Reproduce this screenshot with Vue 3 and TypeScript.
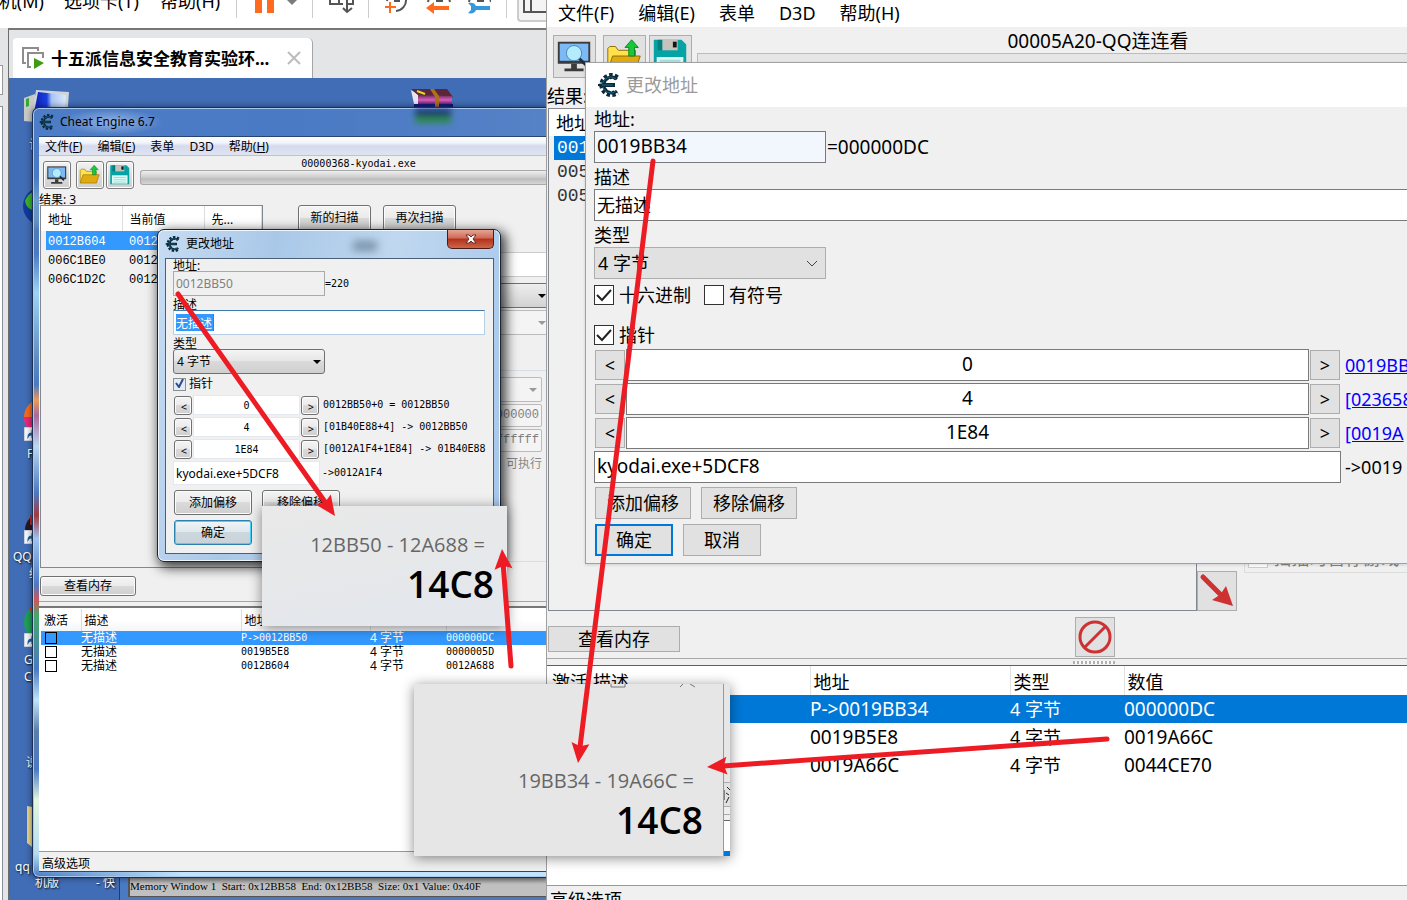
<script setup lang="ts">
import { ref } from 'vue'

interface Point { x: number; y: number }
interface Entry { checked: boolean; name: string; address: string; type: string; value: string }

const oldOffsets = ref([
  { value: '0', result: '0012BB50+0 = 0012BB50' },
  { value: '4', result: '[01B40E88+4] -> 0012BB50' },
  { value: '1E84', result: '[0012A1F4+1E84] -> 01B40E88' },
])
const newOffsets = ref([
  { value: '0', result: '0019BB' },
  { value: '4', result: '[023658' },
  { value: '1E84', result: '[0019A' },
])
const oldEntries = ref<Entry[]>([
  { checked: false, name: '无描述', address: 'P->0012BB50', type: '4 字节', value: '000000DC' },
  { checked: false, name: '无描述', address: '0019B5E8', type: '4 字节', value: '0000005D' },
  { checked: false, name: '无描述', address: '0012B604', type: '4 字节', value: '0012A688' },
])
const newEntries = [
  { address: 'P->0019BB34', type: '4 字节', value: '000000DC' },
  { address: '0019B5E8', type: '4 字节', value: '0019A66C' },
  { address: '0019A66C', type: '4 字节', value: '0044CE70' },
]
const found = [
  { address: '0012B604', value: '0012' },
  { address: '006C1BE0', value: '0012' },
  { address: '006C1D2C', value: '0012' },
]

const oldDescription = ref('无描述')
const newDescription = ref('无描述')
const newAddress = ref('0019BB34')
const oldBase = ref('kyodai.exe+5DCF8')
const newBase = ref('kyodai.exe+5DCF8')
const oldPointer = ref(true)
const newPointer = ref(true)
const hex = ref(true)
const signed = ref(false)

function arrow(from: Point, to: Point) {
  const len = Math.hypot(to.x - from.x, to.y - from.y)
  const ux = (to.x - from.x) / len
  const uy = (to.y - from.y) / len
  const at = (back: number, side: number) =>
    `${to.x - ux * back - uy * side},${to.y - uy * back + ux * side}`
  return {
    head: [at(0, 0), at(20, 9), at(17, 0), at(20, -9)].join(' '),
    x1: from.x, y1: from.y,
    x2: to.x - ux * 16, y2: to.y - uy * 16,
  }
}
const arrows = [
  arrow({ x: 178, y: 294 }, { x: 335, y: 516 }),
  arrow({ x: 653, y: 161 }, { x: 578, y: 763 }),
  arrow({ x: 511, y: 666 }, { x: 502, y: 549 }),
  arrow({ x: 1107, y: 739 }, { x: 707, y: 767 }),
]
</script>

<template>
  <div class="stage">
    <svg class="defs" aria-hidden="true">
      <defs>
        <linearGradient id="scr" x1="0" y1="0" x2="1" y2="0">
          <stop offset="0" stop-color="#0d1fb4" /><stop offset=".4" stop-color="#1a3fe0" /><stop offset=".55" stop-color="#a9c4f4" /><stop offset="1" stop-color="#dbe8fb" />
        </linearGradient>
        <linearGradient id="rar" x1="0" y1="0" x2="0" y2="1">
          <stop offset="0" stop-color="#6b2a55" /><stop offset=".5" stop-color="#d65fc0" /><stop offset="1" stop-color="#5a1450" />
        </linearGradient>
      </defs>
      <symbol id="i-monitor" viewBox="0 0 43 43">
        <path d="M4 6h34v23H4z" fill="#3b3b3b" /><path d="M6 8h30v18H6z" fill="#7db9f7" />
        <path d="M18 29h6v5h-6zM11 34h20v3H11z" fill="#3b3b3b" />
        <path d="M26 23l8 8" stroke="#1c2c44" stroke-width="3" /><circle cx="21" cy="18" r="8" fill="#b4ecff" stroke="#4b87b0" />
      </symbol>
      <symbol id="i-folder" viewBox="0 0 43 43">
        <path d="M4 35V13l2-2h6l3 4h18v20z" fill="#ffe24d" stroke="#8d6b00" />
        <path d="M4 36l5-15h29l-5 15z" fill="#e0ab10" stroke="#8d6b00" />
        <path d="M29 4l7 8h-4v9h-6v-9h-4z" fill="#18c83a" stroke="#0d8625" />
      </symbol>
      <symbol id="i-disk" viewBox="0 0 43 43">
        <path d="M4 4h29l5 5v29H4z" fill="#05a3a4" /><path d="M8 4h5v11H8z" fill="#087d7e" />
        <path d="M13 4h16v11H13z" fill="#c5c3bb" /><path d="M24 6h4v6h-4z" fill="#151515" />
        <path d="M7 22h28v15H7z" fill="#d9fbf8" /><path d="M10 26h22M10 30h22M10 34h22" stroke="#a5dcd9" stroke-width="2" />
      </symbol>
      <symbol id="i-ce" viewBox="0 0 24 24">
        <path d="M20 5A9 9 0 1 0 20 19" fill="none" stroke="#0c2a3a" stroke-width="6" stroke-dasharray="3 2" />
        <path d="M20 6A8 8 0 1 0 20 18" fill="none" stroke="#0c2a3a" stroke-width="3" />
        <path d="M19 6A8 8 0 1 0 19 18" fill="none" stroke="#14688c" stroke-width="1" />
        <path d="M1 11l6-1h11v4H7l-6-1z" fill="#0c2a3a" /><path d="M5 12h11" stroke="#14688c" />
      </symbol>
      <symbol id="i-link" viewBox="0 0 15 15">
        <path d="M0 0h15v15H0z" fill="#f3f6fb" stroke="#9aa9bb" /><path d="M4 13c-1-4 1-7 4-7V3l5 5-5 4V9c-2 0-3 1-4 4z" fill="#1f5fa8" />
      </symbol>
    </svg>

    <section class="old">
      <header class="vmbar">
        <span class="vm-m1">机(M)</span><span class="vm-m2">选项卡(T)</span><span class="vm-m3">帮助(H)</span>
        <i class="vsep"></i>
        <svg class="vm-pause" width="46" height="30" viewBox="0 -14 46 30"><path d="M0 -8h7v21H0zM12 -8h7v21h-7z" fill="#ff6a1f" /><path d="M31 -1h12l-6 6z" fill="#7c7c7c" /></svg>
        <i class="vsep"></i>
        <svg class="vm-dev" width="26" height="30" viewBox="0 -14 26 30" fill="none" stroke="#555" stroke-width="2"><path d="M1 -8v12h13M10 -8v12M24 -8v12h-5M18 -4v15M14 8l4 4 5-4" /></svg>
        <i class="vsep"></i>
        <svg class="vm-clock" width="106" height="30" viewBox="0 -14 106 30" fill="none" stroke-width="2">
          <g stroke="#555"><path d="M11 11a11 11 0 0 0 10 -12M2 1l1-6M10 -6v7h5M43 2l2-8M65 2l-2-8M52 -6v7h6M84 2l2-8M106 2l-2-8M93 -6v7h6" /></g>
          <path d="M0 7h11M5 2v11" stroke="#ff6a1f" /><path d="M41 8l8-6v4h15v4H49v4z" fill="#ff6a1f" />
          <path d="M83 3c4-1 7 0 8 3h14v4H91c-1 3-4 4-8 3l3-3V6z" fill="#3498dd" />
        </svg>
        <i class="vsep"></i>
        <button class="vm-view" type="button"><svg width="30" height="30" viewBox="0 -14 30 30" fill="none" stroke="#555" stroke-width="2"><path d="M30 12H5V-8M12 -8v20" /></svg></button>
      </header>

      <div class="vmbody">
        <aside class="strip"><i class="strip-box"></i><i class="strip-line"></i></aside>
        <div class="vmmain">
          <div class="tabs">
            <div class="tab">
              <svg width="23" height="23" viewBox="0 0 23 23"><path d="M4 16H1V1h15v3M9 20H6V6h15v5" fill="none" stroke="#8d8d8d" stroke-width="2" /><path d="M12 11l10 5-10 6z" fill="#3f9b15" /></svg>
              <b>十五派信息安全教育实验环...</b>
              <button type="button" class="tabx"><svg width="14" height="14" viewBox="0 0 14 14"><path d="M1 1l12 12M13 1L1 13" stroke="#bcbcbc" stroke-width="2" /></svg></button>
            </div>
          </div>
          <div class="desktop">
            <svg class="d-art" width="540" height="822" viewBox="9 78 540 822">
              <path d="M24 98l11-4v28l-11-1z" fill="#c9c9c7" /><path d="M26 99l3-1v8l-3 1z" fill="#35a83a" />
              <path d="M36 90l33 2-2 28-35-4z" fill="#cfd3da" /><path d="M38 92l28 3-2 22-30-4z" fill="url(#scr)" />
              <path d="M411 90l8 5v13l-5-4z" fill="#e8e4ee" /><path d="M411 89h36l6 8-34-1z" fill="#5b2638" />
              <path d="M418 95l34 1v9h-34z" fill="url(#rar)" /><path d="M414 104h39v3h-39z" fill="#111a7a" />
              <path d="M430 89l4 0 5 7v11h-4V97z" fill="#b16e1c" /><path d="M417 91l8 3" stroke="#e6d92d" stroke-width="2" />
              <circle cx="42" cy="206" r="19" fill="#123a9a" /><path d="M25 201c3-7 7-9 9-9v18c-4 0-8-3-9-9z" fill="#39b32a" />
              <circle cx="42" cy="417" r="18" fill="#f46a20" /><path d="M24 417a18 18 0 0 0 12 17V417z" fill="#e8267a" />
              <circle cx="42" cy="530" r="17" fill="#241a24" /><path d="M30 515h6v10h-6z" fill="#b92a2a" />
              <circle cx="42" cy="622" r="18" fill="#1e9f56" /><path d="M29 609l8-6v16z" fill="#d83a30" />
              <path d="M27 806l10 2v43l-10-8z" fill="#e9d68a" />
              <use href="#i-link" x="24" y="427" width="14" height="14" /><use href="#i-link" x="24" y="530" width="14" height="14" /><use href="#i-link" x="24" y="633" width="14" height="14" />
            </svg>
            <span class="dl l1">计</span><span class="dl l2">F</span><span class="dl l3">QQ</span><span class="dl l4">统</span>
            <span class="dl l5">G</span><span class="dl l6">C</span><span class="dl l7">说</span><span class="dl l8">qq</span>
            <span class="dl l9">机版</span><span class="dl l10">- 快</span>

            <div class="memwin"><p>Memory Window 1&nbsp; Start: 0x12BB58&nbsp; End: 0x12BB58&nbsp; Size: 0x1 Value: 0x40F</p></div>

            <div class="ce7">
              <div class="ce7-title"><svg width="16" height="16"><use href="#i-ce" /></svg><span>Cheat Engine 6.7</span><i class="rarblur"></i></div>
              <div class="ce7-client">
                <nav class="ce7-menu"><span>文件(<u>F</u>)</span><span>编辑(<u>E</u>)</span><span>表单</span><span>D3D</span><span>帮助(<u>H</u>)</span></nav>
                <div class="ce7-tools">
                  <button type="button" class="tb first"><svg><use href="#i-monitor" /></svg></button>
                  <button type="button" class="tb"><svg><use href="#i-folder" /></svg></button>
                  <button type="button" class="tb third"><svg><use href="#i-disk" /></svg></button>
                  <div class="ce7-proc"><p class="mono">00000368-kyodai.exe</p><i></i></div>
                </div>
                <p class="ce7-count">结果: 3</p>
                <div class="ce7-mid">
                  <div class="ce7-found">
                    <table>
                      <thead><tr><th>地址</th><th>当前值</th><th>先...</th></tr></thead>
                      <tbody><tr v-for="(f, i) in found" :key="f.address" :class="{ sel: i === 0 }"><td>{{ f.address }}</td><td>{{ f.value }}</td><td></td></tr></tbody>
                    </table>
                  </div>
                  <div class="ce7-scan">
                    <div class="scanbtns"><button type="button" class="b7">新的扫描</button><button type="button" class="b7">再次扫描</button></div>
                    <div class="ghost white"></div>
                    <div class="ghost combo"><i class="tri"></i></div>
                    <div class="ghost combo off"><i class="tri"></i></div>
                    <div class="gbox">
                      <div class="ghost combo off"><i class="tri"></i></div>
                      <div class="ghost num">000000</div>
                      <div class="ghost num">ffffff</div>
                      <div class="exec">可执行</div>
                    </div>
                  </div>
                </div>
                <div class="ce7-view"><button type="button" class="b7">查看内存</button></div>
                <div class="ce7-list">
                  <table>
                    <thead><tr><th>激活</th><th>描述</th><th>地址</th><th>类型</th><th>数值</th></tr></thead>
                    <tbody>
                      <tr v-for="(e, i) in oldEntries" :key="e.address" :class="{ sel: i === 0 }">
                        <td><input v-model="e.checked" type="checkbox" aria-label="激活" /></td><td>{{ e.name }}</td>
                        <td class="mono">{{ e.address }}</td><td>{{ e.type }}</td><td class="mono">{{ e.value }}</td>
                      </tr>
                    </tbody>
                  </table>
                </div>
                <footer class="ce7-foot">高级选项</footer>
              </div>
            </div>

            <div class="dlg7">
              <div class="dlg7-title"><svg width="16" height="16"><use href="#i-ce" /></svg><span>更改地址</span><i class="smudge"></i>
                <button type="button" class="close7"><svg width="12" height="10" viewBox="0 0 12 10"><path d="M1 1h3l2 2 2-2h3L8 5l3 4H8L6 7 4 9H1l3-4z" fill="#fff" stroke="#6b2a2a" /></svg></button>
              </div>
              <form class="dlg7-body" @submit.prevent>
                <label for="oa" class="la">地址:</label>
                <div class="line"><input id="oa" class="t7 dis" value="0012BB50" disabled /><span class="mono">=220</span></div>
                <label for="od">描述</label>
                <div class="desc7"><input id="od" v-model="oldDescription" class="t7" /><span aria-hidden="true"></span></div>
                <label for="ot">类型</label>
                <div class="combo7"><select id="ot"><option>4 字节</option></select><i class="tri"></i></div>
                <label class="chk7"><input v-model="oldPointer" type="checkbox" /><svg width="9" height="9" viewBox="0 0 9 9"><path d="M1 4l3 4 4-8" fill="none" stroke="#2b4a8d" stroke-width="2" /></svg>指针</label>
                <div v-for="o in oldOffsets" :key="o.value" class="off7">
                  <button type="button" class="b7">&lt;</button><input v-model="o.value" class="mono" :aria-label="o.value" /><button type="button" class="b7">&gt;</button><span class="mono">{{ o.result }}</span>
                </div>
                <div class="line base7"><input v-model="oldBase" class="t7 flat" aria-label="指针" /><span class="mono">-&gt;0012A1F4</span></div>
                <div class="btns7"><button type="button" class="b7">添加偏移</button><button type="button" class="b7">移除偏移</button></div>
                <div class="btns7"><button type="submit" class="b7 ok7">确定</button></div>
              </form>
            </div>
          </div>
        </div>
      </div>
    </section>

    <section class="new">
      <nav class="menu10"><span>文件(F)</span><span>编辑(E)</span><span>表单</span><span>D3D</span><span>帮助(H)</span></nav>
      <div class="tools10">
        <button type="button" class="tb10"><svg><use href="#i-monitor" /></svg></button>
        <button type="button" class="tb10 gap"><svg><use href="#i-folder" /></svg></button>
        <button type="button" class="tb10"><svg><use href="#i-disk" /></svg></button>
        <div class="proc10"><p>00005A20-QQ连连看</p><i></i></div>
      </div>
      <p class="count10">结果:</p>
      <div class="mid10">
        <div class="found10">
          <table><thead><tr><th>地址</th></tr></thead><tbody><tr class="sel"><td>001</td></tr><tr><td>005</td></tr><tr><td>005</td></tr></tbody></table>
        </div>
        <div class="side10">
          <fieldset><label><input type="checkbox" disabled />扫描时暂停游戏</label></fieldset>
          <button type="button" class="sq"><svg width="38" height="38" viewBox="0 0 38 38"><path d="M5 5l18 18" stroke="#cd3131" stroke-width="5" stroke-linecap="round" /><path d="M35 34L28 14l-4 6-4 4-6 4z" fill="#cd3131" /></svg></button>
        </div>
      </div>
      <div class="ctl10">
        <button type="button" class="b10 view10">查看内存</button>
        <button type="button" class="sq"><svg width="38" height="38" viewBox="0 0 38 38" fill="none" stroke="#cd3131" stroke-width="3"><circle cx="19" cy="19" r="15" /><path d="M9 29L29 9" /></svg></button>
      </div>
      <div class="split10"><i></i></div>
      <div class="list10">
        <table>
          <thead><tr><th>激活</th><th>描述</th><th>地址</th><th>类型</th><th>数值</th></tr></thead>
          <tbody><tr v-for="(e, i) in newEntries" :key="e.address" :class="{ sel: i === 0 }"><td></td><td></td><td class="latin">{{ e.address }}</td><td>{{ e.type }}</td><td class="latin">{{ e.value }}</td></tr></tbody>
        </table>
      </div>
      <footer class="foot10">高级选项</footer>

      <div class="dlg10">
        <div class="dlg10-title"><svg width="24" height="24"><use href="#i-ce" /></svg><span>更改地址</span></div>
        <form class="dlg10-body" @submit.prevent>
          <label for="na">地址:</label>
          <div class="row10"><input id="na" v-model="newAddress" class="t10 addr10 latin" /><span class="latin">=000000DC</span></div>
          <label for="nd" class="l10">描述</label>
          <input id="nd" v-model="newDescription" class="t10 desc10" />
          <label for="nt" class="l10">类型</label>
          <div class="combo10"><select id="nt"><option>4 字节</option></select><svg width="12" height="7" viewBox="0 0 12 7"><path d="M1 1l5 5 5-5" fill="none" stroke="#444" /></svg></div>
          <div class="checks10">
            <label class="chk10"><input v-model="hex" type="checkbox" /><svg viewBox="0 0 20 20"><path d="M3 10l5 5 9-10" /></svg>十六进制</label>
            <label class="chk10"><input v-model="signed" type="checkbox" />有符号</label>
          </div>
          <div class="checks10 ptr10"><label class="chk10"><input v-model="newPointer" type="checkbox" /><svg viewBox="0 0 20 20"><path d="M3 10l5 5 9-10" /></svg>指针</label></div>
          <div v-for="o in newOffsets" :key="o.value" class="off10">
            <button type="button" class="b10">&lt;</button><input v-model="o.value" class="t10 latin" :aria-label="o.value" /><button type="button" class="b10">&gt;</button><a href="#">{{ o.result }}</a>
          </div>
          <div class="off10 base10"><input v-model="newBase" class="t10 latin" aria-label="指针" /><span>-&gt;0019</span></div>
          <div class="btns10 wide"><button type="button" class="b10">添加偏移</button><button type="button" class="b10">移除偏移</button></div>
          <div class="btns10"><button type="submit" class="b10 ok10">确定</button><button type="button" class="b10">取消</button></div>
        </form>
      </div>
    </section>

    <div class="calc c1"><p>12BB50 - 12A688 =</p><strong>14C8</strong></div>
    <div class="calc c2">
      <svg class="c2-top" width="90" height="5" viewBox="0 0 90 5"><path d="M1 0v3h14V0M70 3l3-3M80 0l5 3" fill="none" stroke="#777" /></svg>
      <p>19BB34 - 19A66C =</p><strong>14C8</strong>
      <div class="c2-edge"><svg width="6" height="18" viewBox="0 0 6 18"><path d="M3 1l3 3M2 7l3 2M2 17l3-6M0 4v10" fill="none" stroke="#222" /></svg></div>
    </div>

    <svg class="arrows" aria-hidden="true">
      <g v-for="(a, i) in arrows" :key="i">
        <line :x1="a.x1" :y1="a.y1" :x2="a.x2" :y2="a.y2" /><polygon :points="a.head" />
      </g>
    </svg>
  </div>
</template>

<style>
body { margin: 0; }
</style>

<style scoped>
* { box-sizing: border-box; }
p { margin: 0; }
button, input, select { font: inherit; color: inherit; margin: 0; padding: 0; border-radius: 0; outline: none; }
select, input[type="checkbox"] { appearance: none; }
table { border-collapse: collapse; table-layout: fixed; width: 100%; }
th { font-weight: 400; text-align: left; padding: 0; }
td { padding: 0; white-space: nowrap; }
svg { display: block; flex: none; }
i { display: block; }
.stage { position: relative; display: grid; grid-template-columns: 547fr 860fr; height: 100vh; overflow: hidden; font-family: "Noto Sans", "Noto Sans CJK SC", sans-serif; color: #000; background: #f0f0f0; }
.defs { position: absolute; width: 0; height: 0; }
.mono { font-family: "DejaVu Sans Mono", "Noto Sans CJK SC", monospace; font-size: 10px; }

.old { display: flex; flex-direction: column; min-width: 0; overflow: hidden; font-size: 12px; line-height: 14px; }
.vmbar { display: flex; align-items: center; height: 54px; margin-top: -26px; background: #fff; font-size: 18px; line-height: 24px; flex: none; white-space: nowrap; }
.vm-m1 { width: 44px; display: flex; justify-content: flex-end; }
.vm-m2 { margin-left: 20px; width: 76px; }
.vm-m3 { margin-left: 20px; width: 62px; }
.vsep { width: 1px; height: 34px; background: #ccc; margin-left: 14px; }
.vm-pause { margin-left: 18px; }
.vm-pause + .vsep { margin-left: 11px; }
.vm-dev { margin-left: 16px; }
.vm-dev + .vsep { margin-left: 13px; }
.vm-clock { margin-left: 16px; }
.vm-clock + .vsep { margin-left: 15px; }
.vm-view { height: 42px; flex: 1; margin-left: 10px; border: 2px solid #ccc; border-right: 0; border-radius: 4px 0 0 4px; background: #f4f4f4; overflow: hidden; }
.vmbody { flex: 1; display: flex; min-height: 0; background: #e4e5e7; }
.strip { width: 8px; flex: none; }
.strip-box { height: 30px; width: 3px; margin-top: 37px; border: 1px solid #999; border-left: 0; background: #fff; }
.strip-line { width: 3px; height: 100%; margin-top: 11px; border: 1px solid #8a9097; border-left: 0; background: #fff; }
.vmmain { flex: 1; min-width: 0; display: flex; flex-direction: column; border-left: 1px solid #6c6c6c; border-top: 2px solid #777; }
.tabs { height: 48px; padding: 8px 0 0 4px; flex: none; }
.tab { display: flex; align-items: center; width: 300px; height: 40px; padding: 0 11px 0 9px; background: #fff; border-right: 1px solid #a5a5a5; border-radius: 4px 5px 0 0; }
.tab b { flex: 1; margin-left: 6px; padding-top: 2px; font-size: 17px; line-height: 24px; white-space: nowrap; }
.tabx { border: 0; background: none; }
.desktop { position: relative; flex: 1; min-height: 0; background: #416db6; overflow: hidden; }
.d-art { position: absolute; left: 0; top: 0; }
.dl { position: absolute; color: #fff; font-size: 12px; text-shadow: 1px 1px 2px #000; white-space: nowrap; }
.l1 { left: 20px; top: 60px; } .l2 { left: 18px; top: 369px; } .l3 { left: 4px; top: 472px; } .l4 { left: 20px; top: 489px; }
.l5 { left: 15px; top: 575px; } .l6 { left: 15px; top: 592px; } .l7 { left: 17px; top: 678px; } .l8 { left: 6px; top: 782px; }
.l9 { left: 26px; top: 798px; } .l10 { left: 87px; top: 798px; }
.memwin { position: absolute; left: 110px; right: 0; bottom: 0; height: 24px; padding: 0 0 3px 8px; background: #4a7ac4; border-left: 1px solid #1e3c70; }
.memwin p { height: 21px; padding: 4px 0 0; background: linear-gradient(#777, #c0c0c0 8px); border: 2px solid #555; border-width: 0 0 1px 2px; font-family: "Liberation Serif", serif; font-size: 11px; line-height: 12px; white-space: nowrap; overflow: hidden; }
.ce7 { position: absolute; left: 23px; right: 0; top: 29px; bottom: 22px; display: flex; flex-direction: column; padding: 0 0 5px 6px; border: 1px solid #1b2f52; border-right: 0; border-radius: 7px 0 0 7px; box-shadow: 0 0 0 1px #a9c8ee inset, 0 0 6px #0008; background: linear-gradient(#4a7ac4aa, #4a7ac4aa 100px, transparent 130px), linear-gradient(90deg, #5383ca, #4a7ac4 50%, #6d91cb 100%) top / 100% 30px no-repeat, linear-gradient(90deg, transparent 8px, #bfe4fb 150px) bottom / 100% 6px no-repeat, linear-gradient(#4a7ac4 0 9%, #bdebd8 12%, #4c7ab8 16%, #4a7ac4 19%, #9ed3f5 24%, #5a8ac0 33%, #4a7ac4 36%, #e79b5b 38%, #a86a9a 40%, #bcd8f2 44%, #4a7ac4 50%, #a23a3e 53%, #9fc4f0 56%, #4a7ac4 62%, #d0555b 64%, #45a86a 66%, #4a7ac4 73%, #bfe6fb 77%, #5a7eac 81%, #4a7ac4 86%, #e4f7df 90%, #b4dcf0 97%, #4a7ac4); }
.ce7-title { display: flex; align-items: center; height: 28px; gap: 5px; flex: none; position: relative; }
.ce7-title span { padding-right: 8px; background: radial-gradient(closest-side, #b7cdf0aa, transparent); line-height: 26px; }
.rarblur { position: absolute; left: 376px; top: 1px; width: 36px; height: 14px; background: linear-gradient(#1b2f7a 4px, #2c8a4a 8px); filter: blur(3px); }
.ce7-client { flex: 1; min-height: 0; display: flex; flex-direction: column; background: #f0f0f0; border: 1px solid #29446f; border-width: 1px 0; }
.ce7-menu { display: flex; gap: 15px; height: 19px; padding: 3px 6px 0; background: linear-gradient(#fff, #f0f3fa 6px, #d5dbec 9px, #dfe4f3); border-bottom: 1px solid #b9c3dd; flex: none; white-space: nowrap; }
.ce7-tools { display: flex; align-items: flex-start; height: 36px; padding: 5px 0 0 4px; flex: none; }
.tb { width: 28px; height: 28px; padding: 1px; border: 1px solid #7a7a7a; border-radius: 3px; background: linear-gradient(#f4f4f4, #ddd 50%, #cfcfcf); box-shadow: inset 0 0 0 1px #fff; }
.tb svg { width: 24px; height: 24px; }
.tb + .tb { margin-left: 5px; }
.tb.third { margin-left: 2px; }
.ce7-proc { flex: 1; margin-left: 6px; text-align: center; }
.ce7-proc p { height: 9px; line-height: 6px; margin-left: 30px; }
.ce7-proc i { height: 15px; border: 1px solid #a9a9a9; border-right: 0; border-radius: 3px 0 0 3px; background: linear-gradient(#eee, #ccc 50%, #bcbcbc 60%, #d6d6d6); }
.ce7-count { height: 13px; line-height: 16px; flex: none; }
.ce7-mid { flex: 364 1 0; min-height: 0; display: flex; padding-left: 1px; }
.ce7-found { width: 223px; flex: none; border: 1px solid #828790; }
.ce7-found thead { background: #fff; }
.ce7-found th { height: 25px; padding: 2px 0 0 7px; border-right: 1px solid #ddd; }
.ce7-found th:nth-child(1) { width: 81px; } .ce7-found th:nth-child(2) { width: 82px; }
.ce7-found td { height: 19px; padding: 2px 0 0 7px; font-family: "Liberation Mono", monospace; }
.ce7-found .sel { color: #fff; background: linear-gradient(90deg, #f0f0f0 5px, #39f 5px); }
.ce7-scan { flex: 1; display: flex; flex-direction: column; }
.scanbtns { display: flex; gap: 12px; padding: 0 0 0 35px; height: 47px; flex: none; }
.scanbtns .b7 { width: 73px; height: 26px; }
.b7 { border: 1px solid #707070; border-radius: 3px; background: linear-gradient(#f4f4f4, #ebebeb 48%, #dadada 50%, #cfcfcf); box-shadow: inset 0 0 0 1px #fcfcfc; line-height: 14px; white-space: nowrap; }
.tri { width: 0; height: 0; border: 4px solid transparent; border-top-color: #000; border-bottom: 0; }
.ghost { margin-left: 200px; height: 25px; border: 1px solid #bbb; border-right: 0; background: #f4f4f4; flex: none; }
.ghost.white { background: #fff; border-color: #ccc; }
.ghost.combo { display: flex; justify-content: flex-end; align-items: center; margin-top: 6px; padding-right: 1px; background: linear-gradient(#eee, #d2d2d2); border-color: #707070; }
.ghost.off { margin-top: 2px; background: #f4f4f4; border-color: #bbb; }
.off .tri { border-top-color: #999; }
.gbox { flex: 1; min-height: 0; margin: 35px 0 6px 200px; padding: 6px 5px 0 0; border: 1px solid #d5dfe5; border-width: 1px 0; }
.gbox .ghost { margin-left: 0; border-right: 1px solid #bbb; border-radius: 2px; padding-right: 4px; }
.gbox .ghost.combo { margin-top: 0; }
.gbox .num { height: 23px; margin-top: 2px; padding-right: 2px; text-align: right; line-height: 20px; color: #808080; font-family: "Liberation Mono", monospace; }
.exec { color: #888; text-align: right; padding-top: 5px; }
.ce7-view { height: 40px; padding: 8px 0 0 1px; border-bottom: 2px solid #777; flex: none; background: linear-gradient(#a5a5a5, #a5a5a5) 0 33px / 100% 1px no-repeat; }
.ce7-view .b7 { width: 96px; height: 20px; line-height: 16px; }
.ce7-list { flex: 242 1 0; min-height: 0; padding: 1px 0 0 2px; background: #fff; }
.ce7-list th { height: 22px; padding: 2px 0 0 3px; border-right: 1px solid #ddd; background: linear-gradient(#fff 50%, #f4f5f7); }
.ce7-list th:nth-child(1) { width: 40px; } .ce7-list th:nth-child(2) { width: 160px; } .ce7-list th:nth-child(3) { width: 129px; } .ce7-list th:nth-child(4) { width: 76px; }
.ce7-list td { height: 14px; line-height: 14px; }
.ce7-list .sel { background: #39f; color: #fff; }
.ce7-list input { display: block; width: 12px; height: 12px; margin-left: 4px; border: 1px solid #000; }
.ce7-foot { height: 20px; padding: 5px 0 0 3px; border-top: 1px solid #999; flex: none; }

.dlg7 { position: absolute; left: 148px; top: 151px; width: 344px; padding: 0 6px 7px 7px; border: 1px solid #1b2430; border-radius: 7px; background: linear-gradient(100deg, #c6dcf3, #a9c8e8 30%, #c0d7ef 60%, #a5c6ea); box-shadow: inset 0 0 0 1px #eef6ff, 3px 4px 12px 2px #000b; }
.dlg7-title { display: flex; align-items: center; gap: 5px; height: 28px; position: relative; }
.smudge { width: 24px; height: 10px; margin: 3px 0 0 114px; background: #40586c88; filter: blur(4px); }
.close7 { position: absolute; right: 0; top: 0; width: 47px; height: 19px; display: grid; place-items: center; border: 1px solid #4c1a1a; border-top: 0; border-radius: 0 0 5px 5px; background: linear-gradient(#e5a493, #cf6a55 45%, #b3311a 50%, #cb6748); }
.dlg7-body { padding: 0 8px 8px 7px; background: #f0f0f0; border: 1px solid #4a5f78; }
.dlg7-body > label { display: block; height: 14px; line-height: 18px; }
.dlg7-body > .la { height: 12px; line-height: 14px; }
.line { display: flex; align-items: center; }
.t7 { width: 152px; height: 25px; padding: 0 2px; border: 1px solid #c0c0c0; border-top-color: #999; background: #fff; }
.t7.dis { color: #808080; background: #f0f0f0; border-color: #aaa; }
.desc7 { position: relative; }
.desc7 .t7 { width: 100%; border-color: #b5cfe7; border-top-color: #3d7bad; color: #fff; background: linear-gradient(#39f, #39f) 2px 3px / 37px 17px no-repeat, #fff; }
.desc7 span { position: absolute; left: 40px; top: 4px; width: 1px; height: 17px; background: #b7611a; }
.combo7 { position: relative; width: 152px; }
.combo7 select { width: 100%; height: 25px; padding-left: 3px; border: 1px solid #707070; border-radius: 3px; background: linear-gradient(#f4f4f4, #e6e6e6 48%, #dadada 50%, #cfcfcf); }
.combo7 .tri { position: absolute; right: 4px; top: 11px; }
.dlg7-body > .chk7 { display: flex; align-items: center; height: 20px; gap: 3px; line-height: 14px; position: relative; }
.chk7 input { width: 13px; height: 13px; border: 1px solid #8e8f8f; background: #e2ebf5; }
.chk7 svg { position: absolute; left: 2px; top: 5px; }
.off7 { display: flex; align-items: center; height: 22px; padding-left: 1px; white-space: nowrap; }
.off7 .b7 { width: 18px; height: 19px; line-height: 12px; padding: 4px 0 0 2px; font-size: 11px; flex: none; }
.off7 input { width: 107px; height: 20px; margin: 0 1px; text-align: center; border: 1px solid #e3e9ef; background: #fff; flex: none; }
.off7 span { margin-left: 4px; }
.base7 { margin: 1px 0 5px; }
.base7 .t7 { width: 147px; height: 24px; border-color: #e3e9ef; }
.base7 span { margin-left: 2px; }
.btns7 { display: flex; gap: 10px; padding-left: 1px; }
.btns7 + .btns7 { margin-top: 5px; }
.btns7 .b7 { width: 78px; height: 25px; }
.b7.ok7 { border-color: #2d7fae; box-shadow: inset 0 0 0 1px #46d4fa; background: linear-gradient(#f0f5f8, #dfe8ed 48%, #cdd8de 50%, #c8d2d8); }

.new { position: relative; display: flex; flex-direction: column; min-width: 0; overflow: hidden; border-left: 1px solid #a0a0a0; margin-left: -1px; background: #f0f0f0; font-size: 18px; line-height: 24px; }
.latin { font-size: 19px; }
.menu10 { display: flex; gap: 24px; height: 27px; padding: 1px 11px 0; background: #fff; flex: none; white-space: nowrap; }
.tools10 { display: flex; height: 56px; padding: 8px 0 0 6px; flex: none; }
.tb10 { width: 43px; height: 43px; padding: 0; border: 1px solid #adadad; background: #e1e1e1; }
.tb10 svg { width: 41px; height: 41px; }
.tb10 + .tb10 { margin-left: 3px; }
.tb10 + .tb10.gap { margin-left: 7px; }
.proc10 { flex: 1; margin-left: 5px; text-align: center; }
.proc10 p { height: 18px; line-height: 12px; padding-left: 92px; font-size: 19px; }
.proc10 i { height: 26px; border: 1px solid #bcbcbc; border-right: 0; background: #e6e6e6; }
.count10 { height: 25px; line-height: 26px; flex: none; }
.mid10 { flex: 503 1 0; min-height: 0; display: flex; padding-left: 1px; }
.found10 { flex: 649; border: 1px solid #828790; }
.found10 th { height: 27px; padding-left: 7px; background: #fff; }
.found10 td { height: 24px; padding-left: 8px; font-family: "Liberation Mono", monospace; color: #333; }
.found10 .sel { background: linear-gradient(90deg, #f0f0f0 5px, #0078d7 5px); }
.found10 .sel td { color: #fff; }
.side10 { flex: 210; position: relative; display: flex; align-items: flex-end; }
.side10 fieldset { position: absolute; left: 47px; right: -4px; bottom: 38px; margin: 0; padding: 0 0 2px 3px; border: 1px solid #dcdcdc; min-width: 0; }
.side10 label { display: flex; align-items: center; gap: 5px; color: #838383; white-space: nowrap; }
.side10 input { width: 20px; height: 20px; border: 1px solid #ccc; background: #fff; }
.sq { width: 40px; height: 40px; border: 1px solid #adadad; background: #e1e1e1; flex: none; }
.ctl10 { display: flex; align-items: flex-end; height: 47px; padding: 0 0 1px 1px; flex: none; }
.ctl10 .sq { margin-left: 395px; }
.b10 { border: 1px solid #adadad; background: #e1e1e1; white-space: nowrap; }
.view10 { width: 132px; height: 26px; line-height: 22px; margin-bottom: 5px; }
.split10 { height: 8px; padding-top: 2px; border-top: 1px solid #a8a8a8; border-bottom: 1px solid #5f5f5f; flex: none; }
.split10 i { width: 42px; height: 3px; margin-left: 526px; background: repeating-linear-gradient(90deg, #b0b0b0 0 2px, #f8f8f8 2px 4px); }
.list10 { flex: 219 1 0; min-height: 0; padding-left: 2px; background: #fff; }
.list10 th { height: 29px; padding: 3px 0 0 3px; border-right: 1px solid #e2e2e2; }
.list10 th:nth-child(1) { width: 41px; border: 0; } .list10 th:nth-child(2) { width: 220px; } .list10 th:nth-child(3) { width: 200px; } .list10 th:nth-child(4) { width: 114px; } .list10 th:nth-child(5) { border: 0; }
.list10 td { height: 28px; }
.list10 .sel { background: #0078d7; color: #fff; }
.foot10 { height: 15px; padding-left: 3px; border-top: 1px solid #999; line-height: 28px; flex: none; overflow: hidden; }
.dlg10 { position: absolute; left: 38px; right: 0; top: 62px; border: 1px solid #a0a0a0; border-right: 0; background: #f0f0f0; box-shadow: 0 1px 3px #0002; }
.dlg10-title { display: flex; align-items: center; gap: 5px; height: 44px; padding-left: 11px; background: #fff; color: #9b9b9b; }
.dlg10-body { padding: 0 0 7px 8px; }
.dlg10-body > label { display: block; height: 24px; }
.dlg10-body > .l10 { height: 26px; line-height: 28px; }
.row10 { display: flex; align-items: center; gap: 1px; }
.t10 { height: 32px; padding: 0 2px 2px; border: 1px solid #7a7a7a; background: #fff; min-width: 0; }
.addr10 { width: 232px; background: #f2f6fd; }
.desc10 { display: block; width: 100%; border-right: 0; }
.combo10 { position: relative; width: 232px; }
.combo10 select { width: 100%; height: 32px; padding-left: 3px; border: 1px solid #adadad; background: #e1e1e1; }
.combo10 svg { position: absolute; right: 8px; top: 13px; }
.checks10 { display: flex; gap: 13px; height: 32px; align-items: center; }
.ptr10 { height: 37px; padding-top: 11px; }
.chk10 { display: flex; align-items: center; gap: 5px; position: relative; }
.chk10 input { width: 20px; height: 20px; border: 1px solid #333; background: #fff; }
.chk10 svg { position: absolute; left: 0; top: 2px; width: 20px; height: 20px; fill: none; stroke: #222; stroke-width: 2; }
.off10 { display: flex; align-items: center; height: 34px; padding-left: 1px; white-space: nowrap; }
.off10 .b10 { width: 30px; height: 30px; }
.off10 .t10 { flex: 1; margin: 0 1px; text-align: center; }
.off10 a, .off10 span { width: 62px; margin-left: 5px; overflow: hidden; color: #00f; }
.off10 span { color: #000; }
.base10 { padding-left: 0; }
.base10 .t10 { text-align: left; margin: 0; }
.base10 span { margin-left: 4px; }
.btns10 { display: flex; gap: 10px; padding: 5px 0 0 1px; }
.btns10.wide { padding-top: 3px; }
.btns10 .b10 { width: 78px; height: 32px; }
.btns10.wide .b10 { width: 96px; }
.btns10 .ok10 { border: 2px solid #0078d7; }

.calc { position: absolute; display: flex; flex-direction: column; align-items: flex-end; font-family: "Open Sans", sans-serif; box-shadow: 0 2px 12px #0007; }
.calc p { font-size: 20px; line-height: 28px; color: #666; white-space: nowrap; }
.calc strong { font-size: 37px; line-height: 50px; font-weight: 600; }
.c1 { left: 262px; top: 506px; width: 245px; height: 120px; padding: 25px 13px 0 0; background: linear-gradient(170deg, #e9e9e8, #e3e7ec); }
.calc p { margin-right: 9px; }
.c2 { left: 414px; top: 684px; width: 316px; height: 172px; padding: 83px 27px 0 0; background: #e6e6e6; }
.c2-top { position: absolute; left: 196px; top: 0; }
.c2-edge { position: absolute; right: 0; top: 0; bottom: 0; width: 7px; padding-top: 102px; border-left: 1px solid #999; background: linear-gradient(#e6e6e6 98px, #aaa 98px 99px, #e1e1e1 99px 122px, #aaa 122px 123px, #eee 123px 130px, #aaa 130px 131px, #eee 131px 136px, #666 136px 137px, #fff 137px 167px, #0078d7 167px); }
.arrows { position: absolute; left: 0; top: 0; width: 100%; height: 100%; pointer-events: none; }
.arrows line { stroke: #ed1c24; stroke-width: 5; stroke-linecap: round; }
.arrows polygon { fill: #ed1c24; }
</style>
